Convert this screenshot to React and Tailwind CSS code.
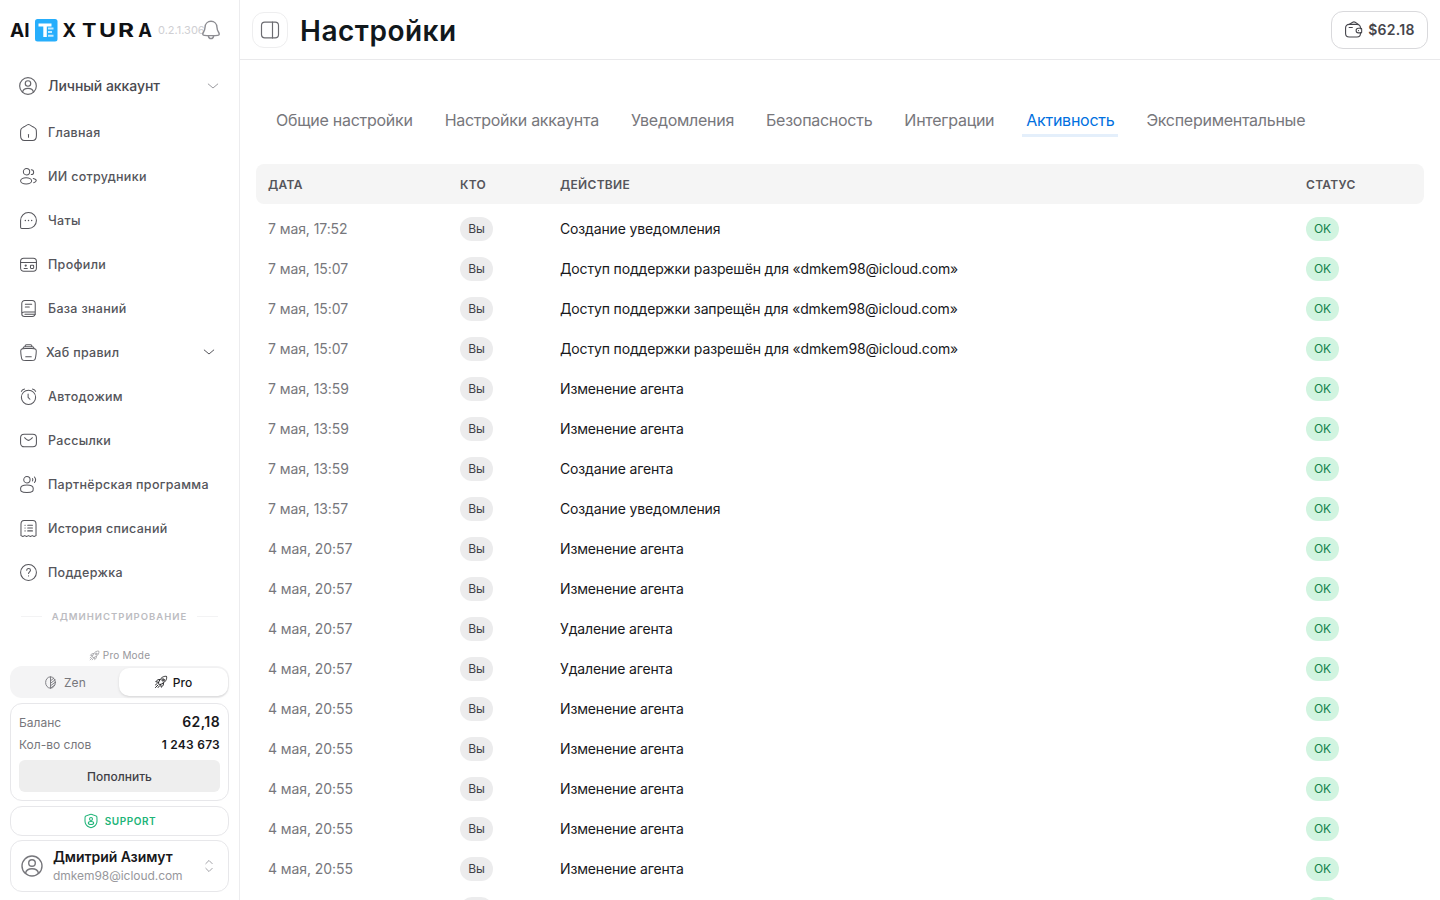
import React, { useState } from 'react';
import clsx from 'clsx';

const Icon = ({ children, className = 'h-[19px] w-[19px]', stroke = 1.3 }) => (
  <svg
    viewBox="0 0 24 24"
    fill="none"
    stroke="currentColor"
    strokeWidth={stroke}
    strokeLinecap="round"
    strokeLinejoin="round"
    className={clsx('shrink-0', className)}
  >
    {children}
  </svg>
);

const HomeIcon = () => (
  <Icon>
    <path d="M2 12.200c0-2.300 0-3.400.5-4.400.5-.9 1.500-1.500 3.400-2.700l2-1.200C9.900 2.600 10.900 2 12 2s2.100.6 4.100 1.900l2 1.200c1.900 1.200 2.900 1.800 3.400 2.700.5 1 .5 2.100.5 4.400v3.500c0 4-1.500 6.300-5 6.300H7c-3.500 0-5-2.300-5-6.300z" />
    <path d="M12 14.500v3.500" />
  </Icon>
);

const UsersIcon = () => (
  <Icon>
    <circle cx="9.500" cy="6" r="4" />
    <path d="M15.500 9.500a3 3 0 1 0 0-6" />
    <ellipse cx="9" cy="17.500" rx="7" ry="4" />
    <path d="M18 14.500c2.300.4 3.800 1.400 3.800 2.700 0 1.100-1.300 2.100-3.300 2.600" />
  </Icon>
);

const ChatIcon = () => (
  <Icon>
    <path d="M12 22a10 10 0 1 0-10-10v8.500c0 .8.600 1.500 1.500 1.500z" />
    <path d="M8 12h.01M12 12h.01M16 12h.01" strokeWidth="1.800" />
  </Icon>
);

const ProfilesIcon = () => (
  <Icon>
    <rect x="2" y="4" width="20" height="16.500" rx="4" />
    <path d="M2 9.500h20" />
    <rect x="14.500" y="13" width="4" height="4" rx="0.800" />
    <circle cx="8.500" cy="13.300" r="0.800" />
    <path d="M6.500 17h4" />
  </Icon>
);

const BookIcon = () => (
  <Icon>
    <path d="M3.500 18V6c0-2.500 1.500-4 4-4h9c2.500 0 4 1.500 4 4v12c0 2.500-1.500 4-4 4H7C5 22 3.500 20.500 3.500 19S5 16.500 7 16.500h13.500" />
    <path d="M8 6.500h8M8 10h5M7.500 19.300h13" />
  </Icon>
);

const HubIcon = () => (
  <Icon>
    <path d="M2.400 13.800c-.4-3.100-.6-4.700.3-5.700C3.600 7 5.200 7 8.400 7h7.200c3.200 0 4.800 0 5.700 1.100.9 1 .7 2.600.3 5.700l-.4 3c-.3 2.400-.5 3.700-1.400 4.400-.9.800-2.200.8-4.700.8H8.900c-2.500 0-3.800 0-4.700-.8-.9-.7-1.100-2-1.400-4.400z" />
    <path d="M5 6.900c.1-1.400 1-2.200 2.400-2.200h9.200c1.400 0 2.300.8 2.400 2.200M7.500 4.600c.1-1.400.7-2.300 2-2.300h5c1.300 0 1.900.9 2 2.300M8.500 17.500h7" />
  </Icon>
);

const AlarmIcon = () => (
  <Icon>
    <circle cx="12" cy="13" r="9" />
    <path d="M11.500 9v4l2.300 2.500M3 5.500C3.500 4 5 2.800 7 2.500M21 5.500C20.500 4 19 2.800 17 2.500" />
  </Icon>
);

const MailIcon = () => (
  <Icon>
    <rect x="2" y="4" width="20" height="16" rx="4.500" />
    <path d="m7 8.500 2.400 2.200c2 1.700 3.200 1.700 5.200 0L17 8.500" />
  </Icon>
);

const PartnerIcon = () => (
  <Icon>
    <circle cx="10" cy="6" r="4" />
    <path d="M18 17c0 3 0 5-8 5s-8-2-8-5 3.600-4.500 8-4.500 8 1.500 8 4.500zM17 4.500c.7 1 .7 2 0 3M19.500 2.500c2 2.300 2 4.700 0 7" />
  </Icon>
);

const HistoryIcon = () => (
  <Icon>
    <path d="M2.500 6.500C2.500 3.500 3.500 2 6.500 2h11c3 0 4 1.500 4 4.500V21l-2.400 1-2.300-1-2.400 1-2.400-1-2.400 1-2.400-1-2.300 1-2.400-1z" />
    <path d="M11 8h6M11 11.500h6M11 15h6M7.500 8h.3M7.500 11.500h.3M7.500 15h.3" />
  </Icon>
);

const HelpIcon = () => (
  <Icon>
    <circle cx="12" cy="12" r="10" />
    <path d="M9.800 9.200c0-3 4.700-3 4.700.1 0 1.900-2.400 1.900-2.400 4M12.100 16.200v.1" />
  </Icon>
);

const UserIcon = ({ className }) => (
  <Icon className={className} stroke={1.4}>
    <circle cx="12" cy="12" r="10" />
    <circle cx="12" cy="9" r="3.300" />
    <path d="M5.500 19.300c.6-3 3-4.500 6.500-4.500s5.900 1.500 6.500 4.500" />
  </Icon>
);

const BellIcon = () => (
  <Icon className="h-5 w-5 text-[#8d8d92]" stroke={1.7}>
    <path d="M12 1.500c-4 0-6.900 3-7.100 6.900-.1 2.600-.7 4.300-2 6.300-1.300 2-1 3.500.9 3.700 1.700.2 4.200.3 8.200.3s6.500-.1 8.200-.3c1.900-.2 2.200-1.700.9-3.700-1.300-2-1.900-3.700-2-6.300-.2-3.900-3.100-6.900-7.100-6.900z" />
    <path d="M8.800 19c.3 2 1.600 3.300 3.200 3.300s2.900-1.300 3.200-3.300" />
  </Icon>
);

const RocketIcon = ({ className }) => (
  <Icon className={className} stroke={1.6}>
    <path d="M9 15.500 7.500 14c1.200-4 3.500-8 7-10.200C17 2.300 19.500 2 21.500 2.400c.5 2.200.1 4.800-1.300 7-2.200 3.600-6.200 5.800-10.200 7.100z" />
    <circle cx="15.500" cy="8.500" r="2" />
    <path d="M10.500 7.800c-3-.5-5.300.7-7.500 3.700l4.500 1M16.200 13.500c.5 3-.7 5.300-3.700 7.500l-1-4.500M7 17l-4.500 4.500M5.500 14.500 2.500 17M9.500 18.500 7 21.500" />
  </Icon>
);

const ZenIcon = () => (
  <Icon className="h-[13px] w-[13px]" stroke={1.7}>
    <ellipse cx="12" cy="12" rx="9" ry="10.500" />
    <path d="M12 1.500v21M12 9l6-5M12 13.500l8.500-6.500M12 18l9-6.500M12.500 22l7.500-5.500" />
  </Icon>
);

const ShieldIcon = () => (
  <Icon className="h-4 w-4" stroke={1.6}>
    <path d="M3 10.400c0-3.200 0-4.800.4-5.300.4-.6 1.900-1.100 4.900-2.100C10.500 2.200 11.300 2 12 2s1.500.2 3.700 1c3 1 4.500 1.500 4.900 2.100.4.500.4 2.100.4 5.300v1.600c0 5.600-4.200 8.400-6.900 9.500-1.600.7-2.600.7-4.200 0C7.200 20.400 3 17.600 3 12z" />
    <circle cx="12" cy="9" r="2.200" />
    <ellipse cx="12" cy="15" rx="4" ry="2.200" />
  </Icon>
);

const WalletIcon = () => (
  <Icon className="h-[19px] w-[19px]" stroke={1.4}>
    <path d="M20.800 11V10c0-2.800-1.600-4.500-4.400-4.500H6.500C3.700 5.500 2 7.200 2 10v7c0 2.800 1.700 4.500 4.500 4.500h9.900c2.800 0 4.400-1.700 4.400-4.500v-1" />
    <path d="M21.500 10.500h-3.300a2.900 2.900 0 0 0 0 5.800h3.300c.5 0 .8-.3.8-.8v-4.200c0-.5-.3-.8-.8-.8zM18.300 13.400h.1M6.500 9.500h4M7 5.300l4-2.500c1.100-.6 2-.6 3.100 0l4 2.700" />
  </Icon>
);

const PanelIcon = () => (
  <Icon className="h-5 w-5 text-[#6c6c71]" stroke={1.4}>
    <rect x="1.800" y="2.500" width="20.400" height="19" rx="4" />
    <path d="M15 2.500v19" />
  </Icon>
);

const ChevronDown = ({ className }) => (
  <Icon className={clsx('h-3 w-3', className)} stroke={2}>
    <path d="m2.500 8 9.500 8 9.500-8" />
  </Icon>
);

const Logo = () => (
  <svg
    viewBox="0 0 144 24"
    className="h-6 w-36 shrink-0 font-['Inter',sans-serif] text-[18.5px] font-bold"
    fill="#101114"
  >
    <text x="0" y="18.700" textLength="19.500" lengthAdjust="spacingAndGlyphs">AI</text>
    <rect x="25" y="1" width="22.500" height="22.500" rx="2.500" fill="#26aefc" />
    <path d="M28.500 5.500h13v3h-4.700v10.500h-3.500V8.500h-4.800z" fill="#fff" />
    <path d="M38 10.500h5.500M38 14h4M38 17.700h5.500" stroke="#c4eaff" strokeWidth="2" />
    <text x="52.500" y="18.700" textLength="13.500" lengthAdjust="spacingAndGlyphs">X</text>
    <text x="72" y="18.700" textLength="14.500" lengthAdjust="spacingAndGlyphs">T</text>
    <text x="89" y="18.700" textLength="17" lengthAdjust="spacingAndGlyphs">U</text>
    <text x="108" y="18.700" textLength="16" lengthAdjust="spacingAndGlyphs">R</text>
    <text x="128.300" y="18.700" textLength="13.700" lengthAdjust="spacingAndGlyphs">A</text>
  </svg>
);

const menu = [
  { label: 'Главная', icon: HomeIcon },
  { label: 'ИИ сотрудники', icon: UsersIcon },
  { label: 'Чаты', icon: ChatIcon },
  { label: 'Профили', icon: ProfilesIcon },
  { label: 'База знаний', icon: BookIcon },
  { label: 'Хаб правил', icon: HubIcon, expandable: true },
  { label: 'Автодожим', icon: AlarmIcon },
  { label: 'Рассылки', icon: MailIcon },
  { label: 'Партнёрская программа', icon: PartnerIcon },
  { label: 'История списаний', icon: HistoryIcon },
  { label: 'Поддержка', icon: HelpIcon },
];

const tabs = [
  'Общие настройки',
  'Настройки аккаунта',
  'Уведомления',
  'Безопасность',
  'Интеграции',
  'Активность',
  'Экспериментальные',
];

const activity = [
  { date: '7 мая, 17:52', action: 'Создание уведомления' },
  { date: '7 мая, 15:07', action: 'Доступ поддержки разрешён для «dmkem98@icloud.com»' },
  { date: '7 мая, 15:07', action: 'Доступ поддержки запрещён для «dmkem98@icloud.com»' },
  { date: '7 мая, 15:07', action: 'Доступ поддержки разрешён для «dmkem98@icloud.com»' },
  { date: '7 мая, 13:59', action: 'Изменение агента' },
  { date: '7 мая, 13:59', action: 'Изменение агента' },
  { date: '7 мая, 13:59', action: 'Создание агента' },
  { date: '7 мая, 13:57', action: 'Создание уведомления' },
  { date: '4 мая, 20:57', action: 'Изменение агента' },
  { date: '4 мая, 20:57', action: 'Изменение агента' },
  { date: '4 мая, 20:57', action: 'Удаление агента' },
  { date: '4 мая, 20:57', action: 'Удаление агента' },
  { date: '4 мая, 20:55', action: 'Изменение агента' },
  { date: '4 мая, 20:55', action: 'Изменение агента' },
  { date: '4 мая, 20:55', action: 'Изменение агента' },
  { date: '4 мая, 20:55', action: 'Изменение агента' },
  { date: '4 мая, 20:55', action: 'Изменение агента' },
  { date: '4 мая, 20:55', action: 'Изменение агента' },
];

const Sidebar = () => {
  const [mode, setMode] = useState('pro');

  return (
    <aside className="flex w-60 shrink-0 flex-col border-r border-[#ececee] bg-white">
      <div className="flex h-[60px] shrink-0 items-center pl-[10px]">
        <Logo />
        <span className="ml-1 w-[43px] whitespace-nowrap text-[11px] text-[#cfcfd3]">0.2.1.306</span>
        <BellIcon />
      </div>

      <button className="mt-[6px] flex h-10 items-center pl-[18px] pr-5 text-[#4a4a50]">
        <UserIcon className="h-5 w-5 text-[#66666b]" />
        <span className="ml-[10px] flex-1 text-left text-sm font-medium tracking-[-0.06px]">Личный аккаунт</span>
        <ChevronDown className="text-[#9b9ba0]" />
      </button>

      <nav className="mt-1">
        {menu.map(({ label, icon: ItemIcon, expandable }) => (
          <button
            key={label}
            className="flex h-11 w-full items-center pl-[19px] pr-6 text-[12.5px] font-medium tracking-[0.3px] text-[#55555b]"
          >
            <ItemIcon />
            <span className={clsx('flex-1 whitespace-nowrap pt-[2px] text-left', expandable ? 'ml-2' : 'ml-2.5')}>{label}</span>
            {expandable && <ChevronDown />}
          </button>
        ))}
      </nav>

      <div className="flex h-11 items-center gap-2.5 px-[21px]">
        <div className="h-px flex-1 bg-[#f3f3f4]" />
        <span className="pt-[2px] text-[9.5px] font-semibold tracking-[1px] text-[#bcbcc1]">АДМИНИСТРИРОВАНИЕ</span>
        <div className="h-px flex-1 bg-[#f3f3f4]" />
      </div>

      <div className="mt-auto flex flex-col px-[10px] pb-2">
        <div className="flex h-[22px] items-center justify-center gap-[3px] text-[10px] tracking-[0.2px] text-[#97979c]">
          <RocketIcon className="h-[11px] w-[11px]" />
          <span>Pro Mode</span>
        </div>

        <div className="flex h-8 items-center rounded-xl bg-[#f4f4f5] p-[1px] text-xs">
          <button
            onClick={() => setMode('zen')}
            className={clsx(
              'flex h-7 flex-1 items-center justify-center gap-[7px] rounded-[10px]',
              mode === 'zen' ? 'bg-white text-[#18181b] shadow' : 'text-[#77777c]'
            )}
          >
            <ZenIcon />
            <span className="pt-[2px] tracking-[0.2px]">Zen</span>
          </button>
          <button
            onClick={() => setMode('pro')}
            className={clsx(
              'flex h-7 flex-1 items-center justify-center gap-[5px] rounded-[10px] pr-px font-medium',
              mode === 'pro' ? 'bg-white text-[#18181b] shadow' : 'text-[#77777c]'
            )}
          >
            <RocketIcon className="h-[14px] w-[14px]" />
            <span className="pt-[2px]">Pro</span>
          </button>
        </div>

        <div className="mt-[5px] h-[98px] rounded-xl border border-[#e7e7ea] px-2 pt-2">
          <div className="flex h-5 items-center justify-between">
            <span className="pt-[2px] text-xs text-[#77777c]">Баланс</span>
            <span className="text-sm font-semibold tracking-[0.4px] text-[#18181b]">62,18</span>
          </div>
          <div className="mt-[3px] flex h-5 items-center justify-between text-xs">
            <span className="text-[#77777c]">Кол-во слов</span>
            <span className="font-semibold tracking-[0.25px] text-[#18181b]">1 243 673</span>
          </div>
          <button className="mt-[5px] h-8 w-full rounded-md bg-[#eeeeee] pt-[2px] text-xs font-medium text-[#3f3f46]">
            Пополнить
          </button>
        </div>

        <button className="mt-[5px] flex h-[30px] items-center justify-center gap-1.5 rounded-xl border border-[#e7e7ea] text-[10px] font-semibold tracking-[0.55px] text-[#20b478]">
          <ShieldIcon />
          SUPPORT
        </button>

        <button className="mt-1 flex h-[52px] items-center rounded-xl border border-[#e7e7ea] pl-[9px] pr-3 text-left">
          <UserIcon className="h-6 w-6 text-[#77777c]" />
          <div className="ml-[9px] flex-1">
            <div className="text-sm font-semibold leading-[18px] tracking-[-0.06px] text-[#18181b]">Дмитрий Азимут</div>
            <div className="pt-px text-xs leading-[18px] tracking-[-0.05px] text-[#97979c]">dmkem98@icloud.com</div>
          </div>
          <Icon className="h-[14px] w-[14px] text-[#9b9ba0]" stroke={1.6}>
            <path d="m6.500 8 5.500-5.500L17.500 8M6.500 16l5.500 5.500 5.500-5.500" />
          </Icon>
        </button>
      </div>
    </aside>
  );
};

const ActivityTable = () => (
  <div>
    <div className="grid h-10 grid-cols-[192px_100px_746px_1fr] items-center rounded-lg bg-[#f5f5f5] pl-3 pt-[2px] text-xs font-semibold tracking-[0.3px] text-[#55555b]">
      <span>ДАТА</span>
      <span>КТО</span>
      <span>ДЕЙСТВИЕ</span>
      <span>СТАТУС</span>
    </div>
    <div className="mt-[5px]">
      {activity.map((row, index) => (
        <div key={index} className="grid h-10 grid-cols-[192px_100px_746px_1fr] items-center pl-3 text-sm">
          <span className="tracking-[-0.08px] text-[#77777c]">{row.date}</span>
          <span className="flex h-6 w-[33px] items-center justify-center rounded-full bg-[#ececed] text-xs text-[#3f3f46]">Вы</span>
          <span className="tracking-[-0.15px] text-[#18181b]">{row.action}</span>
          <span className="flex h-6 w-[33px] items-center justify-center rounded-full bg-[#d1f4e0] text-xs text-[#12814a]">OK</span>
        </div>
      ))}
    </div>
  </div>
);

const App = () => {
  const [activeTab, setActiveTab] = useState('Активность');

  return (
    <div className="flex h-screen overflow-hidden bg-white font-['Inter',sans-serif]">
      <Sidebar />

      <main className="flex min-w-0 flex-1 flex-col">
        <header className="flex h-[60px] shrink-0 items-center border-b border-[#e9e9eb] px-3">
          <button className="flex h-9 w-9 items-center justify-center rounded-xl border border-[#eeeeef]">
            <PanelIcon />
          </button>
          <h1 className="ml-3 pt-[2px] text-[28px] font-semibold tracking-[0.5px] text-[#11181c]">Настройки</h1>
          <button className="ml-auto flex h-[38px] w-[97px] items-center justify-center gap-[5px] rounded-xl border border-[#d9d9dc] text-sm font-semibold tracking-[0.3px] text-[#46464c]">
            <WalletIcon />
            $62.18
          </button>
        </header>

        <div className="px-4 pt-[42px]">
          <div className="flex h-[38px] items-start pl-4">
            {tabs.map((tab) => (
              <button
                key={tab}
                onClick={() => setActiveTab(tab)}
                className={clsx(
                  'mr-6 flex h-[35px] items-center whitespace-nowrap border-b-3 px-1 pt-1 text-base tracking-[-0.27px]',
                  activeTab === tab
                    ? 'border-[#e4effb] text-[#0070e0]'
                    : 'border-transparent text-[#77777c]'
                )}
              >
                {tab}
              </button>
            ))}
          </div>

          <div className="mt-6">
            <ActivityTable />
          </div>
        </div>
      </main>
    </div>
  );
};

export default App;
